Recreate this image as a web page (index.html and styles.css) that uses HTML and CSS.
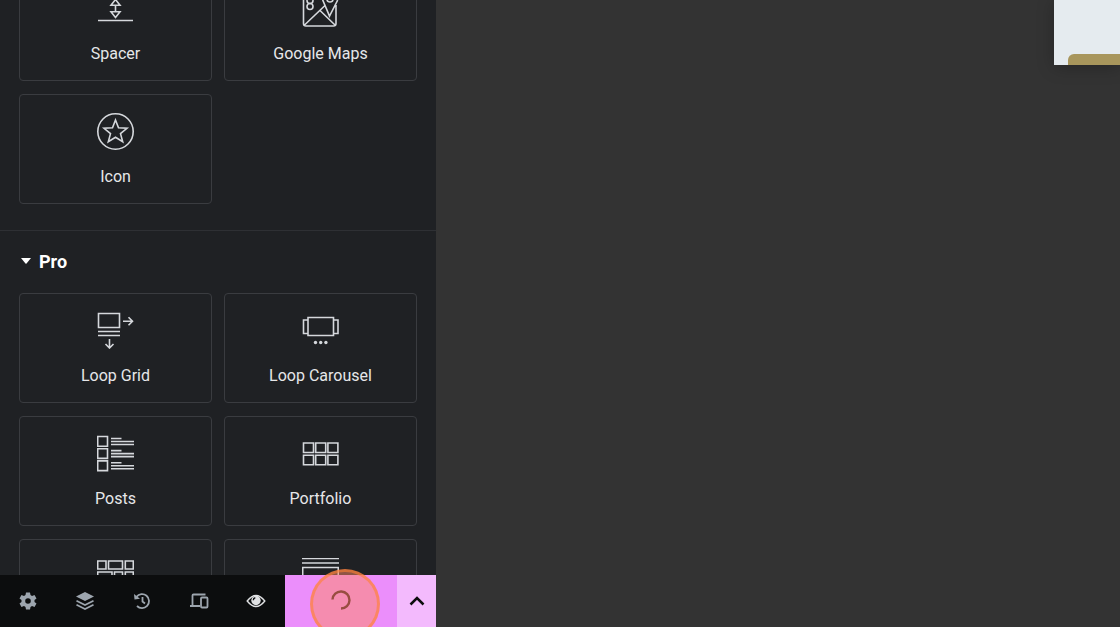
FILE: index.html
```html
<!DOCTYPE html>
<html lang="en">
<head>
<meta charset="utf-8">
<title>Editor</title>
<link rel="stylesheet" href="styles.css">
</head>
<body>
<div class="editor">
  <aside class="panel">
    <div class="panel-content">
      <section class="category category-basic">
        <div class="widgets">
          <button class="widget" type="button">
            <svg class="widget-icon" viewBox="0 0 37 37"><path d="M1 6.5H36M1 30.5H36M18.5 15V22M18.5 9.5L23 15.2H14ZM18.5 27.5L23 21.8H14Z"/></svg>
            <span>Spacer</span>
          </button>
          <button class="widget" type="button">
            <svg class="widget-icon" viewBox="0 0 37 37"><path d="M20 2.5H4a2.500 2.500 0 0 0-2.500 2.500V33.500a2.500 2.500 0 0 0 2.500 2.500H31.500a2.500 2.500 0 0 0 2.500-2.500V15M2 35.500L23 15.500M18 20.500L33.500 35.500M20.500 9.500L27.500 26L35.500 10.500M20.500 9.500a7.700 7.700 0 0 1 15 1"/><circle cx="28" cy="9" r="3"/><circle cx="8" cy="16.500" r="3"/><circle cx="8" cy="10.500" r="3"/></svg>
            <span>Google Maps</span>
          </button>
          <button class="widget" type="button">
            <svg class="widget-icon" viewBox="0 0 37 37"><circle cx="18.500" cy="18.500" r="17.700"/><path d="M18.500 7L21.500 14.800L30 15.300L23.500 20.600L25.700 28.700L18.500 24.200L11.300 28.700L13.500 20.600L7 15.300L15.500 14.800Z"/></svg>
            <span>Icon</span>
          </button>
        </div>
      </section>
      <section class="category">
        <h2 class="category-heading">
          <button class="category-title" type="button">
            <svg class="caret" viewBox="0 0 10 6"><path d="M0 0H10L5.500 5.500Q5 6 4.500 5.500Z"/></svg>
            <span>Pro</span>
          </button>
        </h2>
        <div class="widgets">
          <button class="widget" type="button">
            <svg class="widget-icon" viewBox="0 0 37 37"><path d="M1.500 1.500H22.500V15.500H1.500ZM1 19.500H23M1 23.500H23M26 9.200H35M31.500 5.200L35.500 9.200L31.500 13.200M12.500 27V35.500M8.500 32L12.500 36L16.500 32"/></svg>
            <span>Loop Grid</span>
          </button>
          <button class="widget" type="button">
            <svg class="widget-icon" viewBox="0 0 37 37"><path d="M6 5.500H31.500V23.500H6ZM6 8H1.500V21.500H6M31.500 8H36V21.500H31.500"/><g class="solid"><circle cx="13.500" cy="30.500" r="1.700"/><circle cx="18.700" cy="30.500" r="1.700"/><circle cx="23.900" cy="30.500" r="1.700"/></g></svg>
            <span>Loop Carousel</span>
          </button>
          <button class="widget" type="button">
            <svg class="widget-icon" viewBox="0 0 37 37"><path d="M.7 1.500H10.500V11.200H.7ZM.7 13.700H10.500V23.400H.7ZM.7 25.900H10.500V35.600H.7ZM14 3.500H24.500M14 6.500H37M14 9.500H37M14 15.600H24.500M14 18.600H37M14 21.600H37M14 27.800H24.500M14 30.800H37M14 33.800H37"/></svg>
            <span>Posts</span>
          </button>
          <button class="widget" type="button">
            <svg class="widget-icon" viewBox="0 0 37 37"><path d="M1.500 8H11.500V17.500H1.500ZM13.700 8H23.700V17.500H13.700ZM25.900 8H35.900V17.500H25.900ZM1.500 20.300H11.500V29.800H1.500ZM13.700 20.300H23.700V29.800H13.700ZM25.900 20.300H35.900V29.800H25.900Z"/></svg>
            <span>Portfolio</span>
          </button>
          <button class="widget" type="button" aria-label="Gallery">
            <svg class="widget-icon" viewBox="0 0 37 37"><path d="M.7 3H9V11H.7ZM11.500 3H25.500V11H11.500ZM28.300 3H36.300V11H28.300ZM.7 14H15V22H.7ZM17.500 14H25.500V22H17.500ZM28.300 14H36.300V22H28.300Z"/></svg>
          </button>
          <button class="widget" type="button" aria-label="Form">
            <svg class="widget-icon" viewBox="0 0 37 37"><path d="M0 .5H37M0 5H37M.7 9.500H36.300V22H.7Z"/></svg>
          </button>
        </div>
      </section>
    </div>
    <footer class="toolbar">
      <button class="tool" type="button" aria-label="Settings">
        <svg viewBox="0 0 20 20"><path class="fill" fill-rule="evenodd" d="M8 1.500h4l.5 2.500 1.500.9 2.500-.9 2 3.400-2 1.700v1.800l2 1.700-2 3.400-2.500-.9-1.500.9-.5 2.500h-4l-.5-2.500-1.500-.9-2.500.9-2-3.400 2-1.700v-1.800l-2-1.700 2-3.400 2.500.9 1.500-.9ZM10 7.200a2.800 2.800 0 1 0 0 5.600a2.800 2.800 0 1 0 0-5.600Z"/></svg>
      </button>
      <button class="tool" type="button" aria-label="Structure">
        <svg viewBox="0 0 20 20"><path class="fill" d="M10 1L19 5.500L10 10L1 5.500Z"/><path d="M1.500 9.800L10 14L18.500 9.800M1.500 13.800L10 18L18.500 13.800"/></svg>
      </button>
      <button class="tool" type="button" aria-label="History">
        <svg viewBox="0 0 20 20"><path d="M4.500 5.800A7 7 0 1 1 5 15M10.500 6V10.500L13 12.500"/><path class="fill" d="M2 3L8 7.800L2.500 8.600Z"/></svg>
      </button>
      <button class="tool" type="button" aria-label="Responsive mode">
        <svg viewBox="0 0 20 20"><path d="M16.500 3.500H4.500Q3.500 3.500 3.500 4.500V14.500M1 15H11M13 6.500H17.500Q18.500 6.500 18.500 7.500V15.500Q18.500 16.500 17.500 16.500H13Q12 16.500 12 15.500V7.500Q12 6.500 13 6.500Z"/></svg>
      </button>
      <button class="tool tool-preview" type="button" aria-label="Preview changes">
        <svg viewBox="0 0 20 20"><path d="M1.200 10Q10 -1 18.800 10Q10 21 1.200 10Z"/><circle class="fill" cx="10" cy="9.500" r="4.700"/><path class="glint" d="M7.300 9.300Q7.300 7.200 9.300 6.800"/></svg>
      </button>
      <button class="publish" type="button" aria-label="Publish">
        <svg class="spinner" viewBox="0 0 20 20"><path d="M1.500 9.500A8.500 8.500 0 1 1 10 18.500"/></svg>
        <span class="click-marker"></span>
      </button>
      <button class="publish-options" type="button" aria-label="Save options">
        <svg class="chevron" viewBox="0 0 16 10"><path d="M1.500 8.500L8 2L14.500 8.500"/></svg>
      </button>
    </footer>
  </aside>
  <main class="preview">
    <div class="page">
      <div class="page-banner"></div>
    </div>
  </main>
</div>
</body>
</html>
```

FILE: styles.css
```css
* {
  box-sizing: border-box;
}

body {
  margin: 0;
  font-family: Roboto, "Liberation Sans", sans-serif;
  color: #e6e7e9;
  background: #333333;
}

button {
  margin: 0;
  padding: 0;
  border: 0;
  background: none;
  color: inherit;
  font: inherit;
}

svg {
  display: block;
  fill: none;
  stroke: currentColor;
}

.editor {
  display: flex;
  height: 100vh;
  overflow: hidden;
}

.panel {
  display: flex;
  flex-direction: column;
  flex: 0 0 436px;
  background: #1f2124;
}

.panel-content {
  flex: 1;
  min-height: 0;
  overflow: hidden;
}

.category {
  padding: 0 19px 26px;
  border-bottom: 1px solid #2e3034;
}

/* The list is scrolled part of the way through its first row. */
.category-basic {
  margin-top: -29px;
}

.category-heading {
  margin: 0;
}

.category-title {
  display: flex;
  align-items: center;
  gap: 8px;
  width: 100%;
  height: 62px;
  padding: 0 0 2px 2px;
  font-size: 18px;
  font-weight: 700;
  color: #ffffff;
}

.caret {
  width: 10px;
  height: 6px;
  fill: currentColor;
  stroke: none;
}

.widgets {
  display: grid;
  grid-template-columns: 1fr 1fr;
  gap: 13px 12px;
}

.widget {
  display: flex;
  flex-direction: column;
  align-items: center;
  gap: 17px;
  min-height: 110px;
  padding: 18px 8px 16px;
  border: 1px solid #3a3c40;
  border-radius: 4px;
  font-size: 16px;
  line-height: 20px;
}

.widget-icon {
  width: 37px;
  height: 37px;
  stroke-width: 1.6;
  color: #d5d8dc;
}

.solid {
  fill: currentColor;
  stroke: none;
}

.toolbar {
  display: grid;
  grid-template-columns: repeat(5, 57px) 1fr 39px;
  height: 52px;
  background: #0c0d0e;
}

.tool {
  display: flex;
  align-items: center;
  justify-content: center;
  padding: 0 1px 1px 0;
  color: #9da5ae;
}

.tool svg {
  width: 20px;
  height: 20px;
  stroke-width: 1.8;
}

.tool .fill {
  fill: currentColor;
  stroke: none;
}

.tool-preview {
  color: #e0e1e3;
}

.tool-preview svg {
  stroke-width: 1.4;
}

.tool .glint {
  stroke: #0c0d0e;
}

.publish {
  position: relative;
  display: flex;
  align-items: center;
  justify-content: center;
  padding-bottom: 2px;
  background: #eb8efb;
}

.spinner {
  width: 20px;
  height: 20px;
  color: #31101c;
  stroke-width: 2.4;
}

.click-marker {
  position: absolute;
  top: -6px;
  left: 25px;
  width: 70px;
  height: 70px;
  border: 3px solid rgba(255, 130, 50, 0.6);
  border-radius: 50%;
  background: rgba(255, 138, 100, 0.5);
}

.publish-options {
  display: flex;
  align-items: center;
  justify-content: center;
  color: #0c0d0e;
  background: #f3bafd;
}

.chevron {
  width: 16px;
  height: 10px;
  stroke-width: 2.5;
}

.preview {
  display: flex;
  flex: 1;
  align-items: flex-start;
  justify-content: flex-end;
}

.page {
  flex: 0 0 66px;
  padding: 54px 0 0 14px;
  background: #e5ebef;
  box-shadow: 0 2px 16px rgba(0, 0, 0, 0.25);
}

.page-banner {
  height: 11px;
  border-top-left-radius: 6px;
  background: #a8965c;
}
```
